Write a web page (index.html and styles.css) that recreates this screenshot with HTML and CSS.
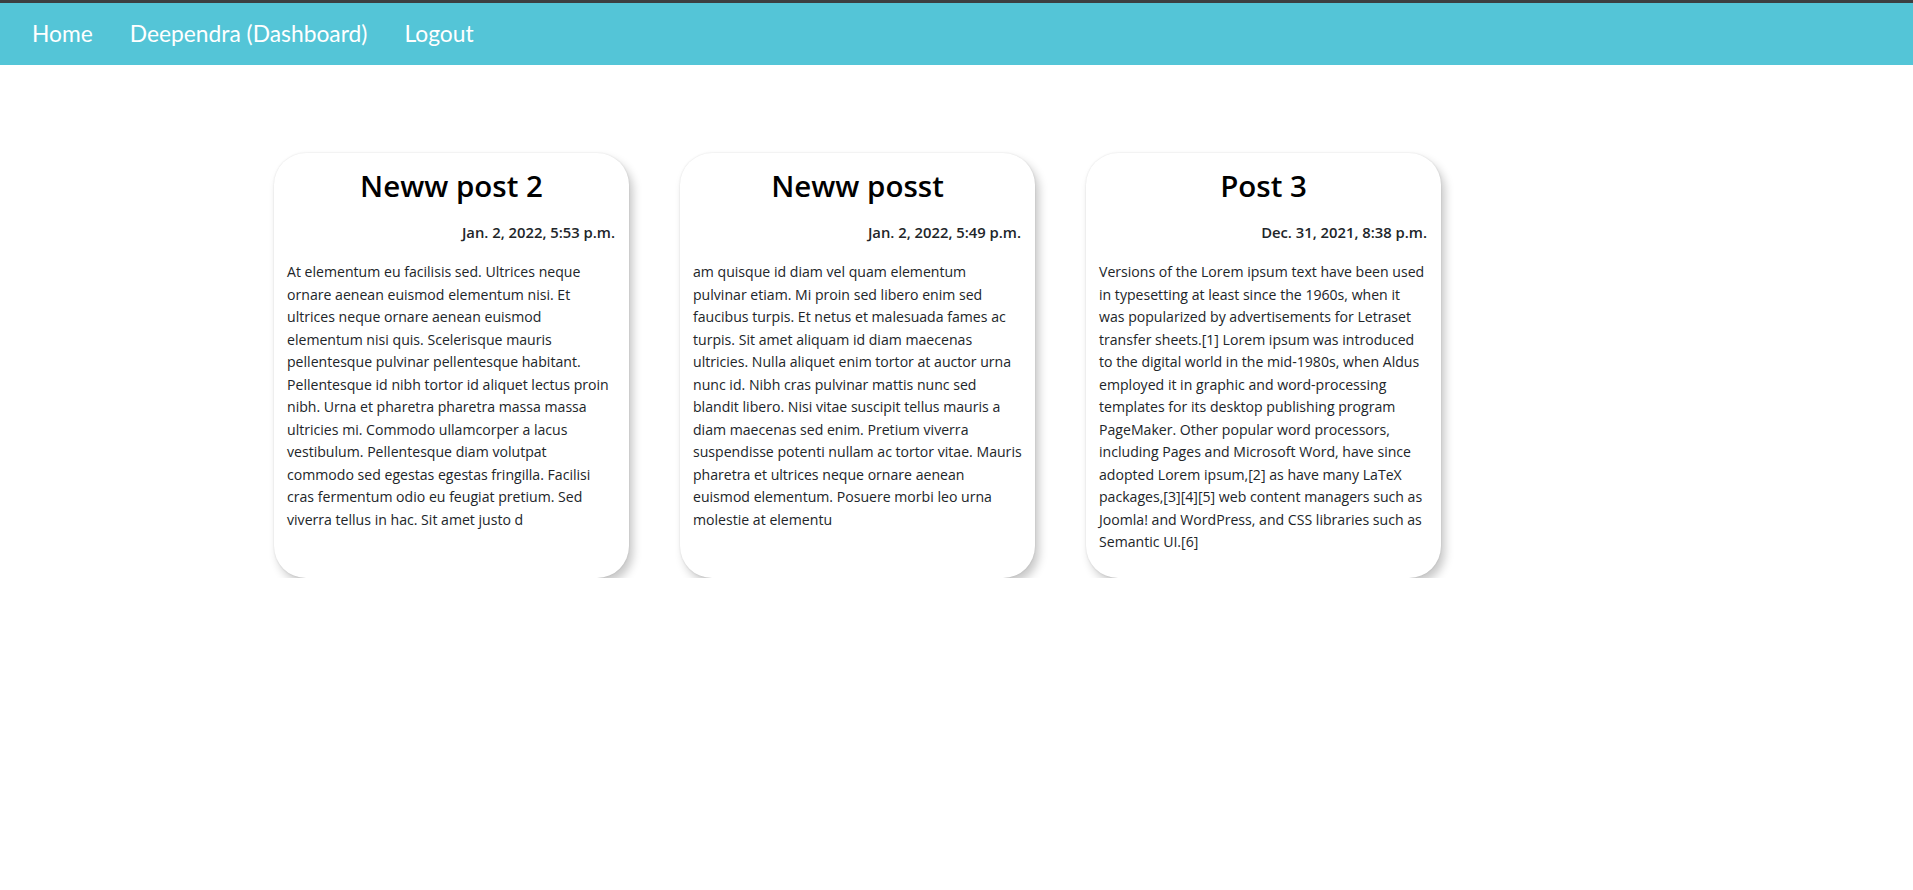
FILE: index.html
```html
<!DOCTYPE html>
<html lang="en">
<head>
<meta charset="utf-8">
<title>Dashboard</title>
<link rel="stylesheet" href="styles.css">
</head>
<body>
<nav class="navbar">
  <a class="nav-link" href="#">Home</a>
  <a class="nav-link" href="#">Deependra (Dashboard)</a>
  <a class="nav-link" href="#">Logout</a>
</nav>
<main class="posts">
  <article class="card">
    <h2 class="card-title">Neww post 2</h2>
    <p class="card-date">Jan. 2, 2022, 5:53 p.m.</p>
    <p class="card-text">At elementum eu facilisis sed. Ultrices neque ornare aenean euismod elementum nisi. Et ultrices neque ornare aenean euismod elementum nisi quis. Scelerisque mauris pellentesque pulvinar pellentesque habitant. Pellentesque id nibh tortor id aliquet lectus proin nibh. Urna et pharetra pharetra massa massa ultricies mi. Commodo ullamcorper a lacus vestibulum. Pellentesque diam volutpat commodo sed egestas egestas fringilla. Facilisi cras fermentum odio eu feugiat pretium. Sed viverra tellus in hac. Sit amet justo d</p>
  </article>
  <article class="card">
    <h2 class="card-title">Neww posst</h2>
    <p class="card-date">Jan. 2, 2022, 5:49 p.m.</p>
    <p class="card-text">am quisque id diam vel quam elementum pulvinar etiam. Mi proin sed libero enim sed faucibus turpis. Et netus et malesuada fames ac turpis. Sit amet aliquam id diam maecenas ultricies. Nulla aliquet enim tortor at auctor urna nunc id. Nibh cras pulvinar mattis nunc sed blandit libero. Nisi vitae suscipit tellus mauris a diam maecenas sed enim. Pretium viverra suspendisse potenti nullam ac tortor vitae. Mauris pharetra et ultrices neque ornare aenean euismod elementum. Posuere morbi leo urna molestie at elementu</p>
  </article>
  <article class="card">
    <h2 class="card-title">Post 3</h2>
    <p class="card-date">Dec. 31, 2021, 8:38 p.m.</p>
    <p class="card-text">Versions of the Lorem ipsum text have been used in typesetting at least since the 1960s, when it was popularized by advertisements for Letraset transfer sheets.[1] Lorem ipsum was introduced to the digital world in the mid-1980s, when Aldus employed it in graphic and word-processing templates for its desktop publishing program PageMaker. Other popular word processors, including Pages and Microsoft Word, have since adopted Lorem ipsum,[2] as have many LaTeX packages,[3][4][5] web content managers such as Joomla! and WordPress, and CSS libraries such as Semantic UI.[6]</p>
  </article>
</main>
</body>
</html>
```
FILE: styles.css
```css
* { box-sizing: border-box; }

body {
  margin: 0;
  background: #ffffff;
  font-family: "Segoe UI", "Open Sans", "Noto Sans", sans-serif;
  color: #212529;
}

.navbar {
  display: flex;
  align-items: center;
  gap: 37px;
  height: 65px;
  padding: 0 0 2px 32px;
  background: #54c5d7;
  border-top: 3px solid #3c3f41;
}

.nav-link {
  color: #ffffff;
  text-decoration: none;
  font-family: Lato, "Noto Sans", sans-serif;
  font-size: 22.8px;
  font-weight: 400;
}

.posts {
  display: flex;
  gap: 51px;
  padding: 88px 0 0 274px;
}

.card {
  width: 355px;
  height: 425px;
  padding: 14px 13px 12px 13px;
  background: #ffffff;
  border-radius: 32px;
  box-shadow: 4px 6px 10px rgba(0, 0, 0, 0.22), 0 0 2px rgba(0, 0, 0, 0.12);
  overflow: hidden;
}

.card-title {
  margin: 0;
  text-align: center;
  font-size: 29.5px;
  line-height: 38px;
  font-weight: 600;
  color: #000000;
}

.card-date {
  margin: 17px 1px 0 0;
  text-align: right;
  font-size: 14.8px;
  line-height: 21px;
  font-weight: 600;
  color: #212529;
}

.card-text {
  margin: 18px 0 0;
  font-size: 14.1px;
  line-height: 22.5px;
  color: #212529;
}
```
